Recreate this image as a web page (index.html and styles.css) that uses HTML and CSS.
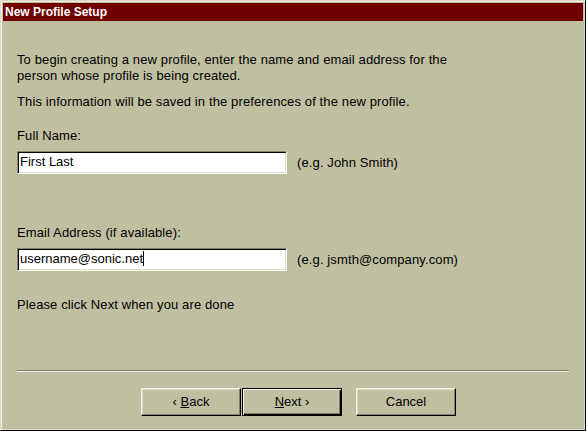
FILE: index.html
```html
<!DOCTYPE html>
<html lang="en">

<head>
    <meta charset="UTF-8">
    <title>New Profile Setup</title>
    <link rel="stylesheet" href="styles.css">
</head>

<body>
    <div class="dialog">
        <div class="titlebar">New Profile Setup</div>

        <div class="content">
            <p class="intro">To begin creating a new profile, enter the name and email address for the<br>person whose profile is being created.</p>
            <p class="note">This information will be saved in the preferences of the new profile.</p>

            <div class="field-label name-label">Full Name:</div>
            <div class="field-row">
                <div class="textbox">First Last</div>
                <span class="hint">(e.g. John Smith)</span>
            </div>

            <div class="field-label email-label">Email Address (if available):</div>
            <div class="field-row">
                <div class="textbox">username@sonic.net<span class="caret"></span></div>
                <span class="hint">(e.g. jsmth@company.com)</span>
            </div>

            <p class="done">Please click Next when you are done</p>
        </div>

        <div class="separator"></div>

        <div class="buttons">
            <div class="btn">&lsaquo; <u>B</u>ack</div>
            <div class="btn btn-default"><u>N</u>ext &rsaquo;</div>
            <div class="btn btn-cancel">Cancel</div>
        </div>
    </div>
</body>

</html>
```

FILE: styles.css
```css
body {
    margin: 0;
    background: #c0bfa2;
    font-family: "Liberation Sans", Arial, sans-serif;
    font-size: 13px;
    color: #000;
}

.dialog {
    box-sizing: border-box;
    display: flex;
    flex-direction: column;
    width: 586px;
    height: 431px;
    padding: 2px;
    background: #c0bfa2;
    border: 1px solid;
    border-color: #d8d7c0 #000 #000 #d8d7c0;
    box-shadow: inset 1px 1px 0 #f2f1e4, inset -1px -1px 0 #dcdbc6;
}

.titlebar {
    height: 18px;
    line-height: 18px;
    padding-left: 2px;
    background: #700000;
    color: #fff;
    font-weight: bold;
    font-size: 12px;
}

.content {
    flex: 1;
    padding: 0 14px;
    letter-spacing: 0.12px;
}

p {
    margin: 0;
    line-height: 16px;
}

.intro {
    margin-top: 31px;
}

.note {
    margin-top: 10px;
}

.field-label {
    line-height: 16px;
}

.name-label {
    margin-top: 18px;
}

.email-label {
    margin-top: 51px;
}

.field-row {
    display: flex;
    align-items: center;
    margin-top: 7px;
}

.textbox {
    box-sizing: border-box;
    width: 270px;
    height: 23px;
    line-height: 19px;
    padding-left: 2px;
    background: #fff;
    border: 1px solid;
    border-color: #828170 #fff #fff #828170;
    box-shadow: inset 1px 1px 0 #000, inset -1px -1px 0 #dcdbc6;
    white-space: nowrap;
    letter-spacing: 0;
}

.caret {
    display: inline-block;
    width: 1px;
    height: 15px;
    background: #000;
    vertical-align: -3px;
}

.hint {
    margin-left: 10px;
}

.done {
    margin-top: 26px;
}

.separator {
    margin: 0 14px;
    height: 1px;
    background: #828170;
    border-bottom: 1px solid #f2f1e4;
}

.buttons {
    display: flex;
    padding: 16px 0 12px 138px;
}

.btn {
    box-sizing: border-box;
    width: 100px;
    height: 28px;
    line-height: 26px;
    text-align: center;
    border: 1px solid;
    border-color: #f2f1e4 #000 #000 #f2f1e4;
    box-shadow: inset -1px -1px 0 #828170, inset 1px 1px 0 #dcdbc6;
}

.btn-default {
    margin-left: 1px;
    border-color: #000;
    box-shadow: inset 1px 1px 0 #f2f1e4, inset -1px -1px 0 #000, inset -2px -2px 0 #828170;
}

.btn-cancel {
    margin-left: 14px;
}
```
